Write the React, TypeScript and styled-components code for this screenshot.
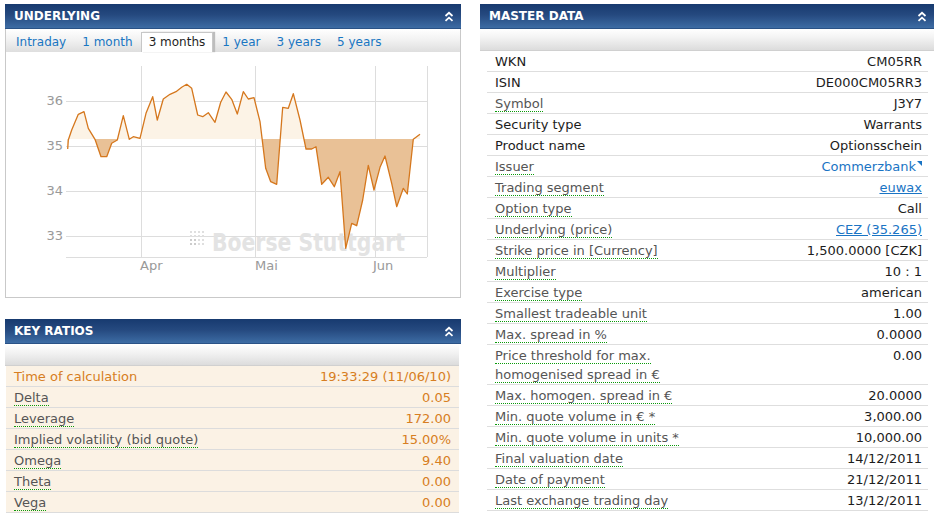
import * as React from 'react';
import styled, { createGlobalStyle } from 'styled-components';

const GlobalStyle = createGlobalStyle`
  body {
    margin: 0;
    background: #fff;
    font-family: "DejaVu Sans", Verdana, sans-serif;
    font-size: 13px;
    color: #222;
  }
`;

const Page = styled.div`
  display: grid;
  grid-template-columns: 456px 454px;
  column-gap: 19px;
  padding: 4px 0 0 5px;
  align-items: start;
`;

const Column = styled.div`
  display: flex;
  flex-direction: column;
  gap: 21px;
`;

const Panel = styled.section``;

const HeaderBar = styled.header`
  height: 25px;
  box-sizing: border-box;
  display: flex;
  align-items: center;
  justify-content: space-between;
  padding: 0 7px 0 9px;
  background: linear-gradient(#173a6f, #25497f 45%, #3d6ca4);
  border-bottom: 1px solid #2a5286;
  color: #fff;
  font-weight: bold;
  font-size: 12px;
`;

const CollapseIcon = () => (
  <svg width="10" height="11" viewBox="0 0 10 11">
    <polyline points="1.5,5 5,1.8 8.5,5" fill="none" stroke="#fff" strokeWidth="1.8" />
    <polyline points="1.5,9.8 5,6.6 8.5,9.8" fill="none" stroke="#fff" strokeWidth="1.8" />
  </svg>
);

const PanelHeader: React.FC<{ children: React.ReactNode }> = ({ children }) => (
  <HeaderBar>
    <span>{children}</span>
    <CollapseIcon />
  </HeaderBar>
);

const ChartBody = styled.div`
  border: 1px solid #c9c9c9;
  border-top: none;
`;

const TabBar = styled.nav`
  height: 23px;
  display: flex;
  align-items: flex-end;
  padding-left: 2px;
  background: linear-gradient(#fff, #f1f1f1 50%, #dedede);
  font-size: 12px;
`;

const Tab = styled.span<{ $active?: boolean }>`
  height: 19px;
  line-height: 19px;
  padding: 0 ${p => (p.$active ? '7px' : '8px')};
  color: ${p => (p.$active ? '#1e1e1e' : '#1976c2')};
  background: ${p => (p.$active ? '#fff' : 'transparent')};
  border: ${p => (p.$active ? '1px solid #c7c7c7' : 'none')};
  border-bottom: none;
  box-shadow: ${p => (p.$active ? '2px 0 1px #bdbdbd' : 'none')};
  margin-right: ${p => (p.$active ? '1px' : '0')};
`;

const Strip = styled.div`
  height: 21px;
  background: linear-gradient(#fff, #f3f3f3 40%, #dcdcdc);
  border-bottom: 1px solid #d0d0d0;
`;

const RatioBody = styled.div`
  padding-right: 2px;
`;

const RatioRow = styled.div`
  display: flex;
  justify-content: space-between;
  align-items: flex-start;
  margin-left: 1px;
  padding: 1px 8px 0 8px;
  line-height: 19px;
  background: #fbf2e5;
  border-bottom: 1px solid #dcdcdc;
  color: #d77e22;
`;

const Label = styled.span<{ $plain?: boolean }>`
  color: ${p => (p.$plain ? '#1c1c1c' : '#555')};
  border-bottom: ${p => (p.$plain ? 'none' : '1px dotted #0a9a0a')};
`;

const MasterBody = styled.div``;

const MasterRow = styled.div`
  display: flex;
  justify-content: space-between;
  align-items: flex-start;
  margin: 0 6px 0 7px;
  padding: 1px 6px 0 8px;
  line-height: 19px;
  border-bottom: 1px solid #dedede;
`;

const LabelCell = styled.div`
  max-width: 215px;
`;

const Value = styled.span`
  color: #1c1c1c;
  text-align: right;
  white-space: nowrap;
`;

const LinkValue = styled.a<{ $underline?: boolean }>`
  color: #1a74c4;
  text-decoration: ${p => (p.$underline ? 'underline' : 'none')};
  white-space: nowrap;
`;

const ExtMark = styled.span`
  display: inline-block;
  width: 0;
  height: 0;
  border-top: 5px solid #1a74c4;
  border-left: 5px solid transparent;
  vertical-align: top;
  margin-top: 4px;
  margin-left: 1px;
`;

const pts: [number, number][] = [
  [67.7, 149], [68.3, 140], [71.7, 130], [78.3, 114.3], [84, 111.7], [88.3, 128.3],
  [95, 139.3], [101, 156.7], [106.7, 156.7], [111.7, 143.3], [117.3, 140], [123.3, 115.7],
  [129.3, 139.3], [133.3, 136.7], [140, 138.3], [146, 113.3], [152.7, 96.7], [157.3, 120],
  [163.3, 99], [170, 94.3], [176, 91.7], [181.7, 87.3], [186.7, 84.3], [191.7, 88.3],
  [197.7, 115], [202.7, 116.7], [208.3, 112.7], [215, 122.3], [220.7, 102.3], [226, 92],
  [231.7, 99.3], [237.3, 114], [243.3, 91.7], [248.3, 99], [254, 97.7], [260, 121.7],
  [265.7, 168.3], [270.7, 181.7], [276.7, 184.3], [282.7, 107.3], [288.3, 108.3], [293.3, 93.7],
  [300, 120], [306, 149], [311.7, 149], [316, 146.7], [321.7, 184.3], [328.3, 177.3],
  [334.3, 186.7], [340, 171.7], [345.7, 248.3], [351.7, 223.3], [356.7, 225.7], [362.7, 200],
  [368.3, 165.3], [374, 190], [380, 167.3], [385, 156], [391.7, 183.3], [396.7, 206.7],
  [403.3, 188.3], [407.3, 194], [413.3, 139.3], [420, 134.3],
];

const BASE = 139;

const Chart = () => {
  const line = pts.map(p => p.join(',')).join(' ');
  const area = `${line} 420,${BASE} 67.7,${BASE}`;
  const dots: React.ReactNode[] = [];
  for (let r = 0; r < 4; r++) {
    for (let c = 0; c < 4; c++) {
      dots.push(
        <rect
          key={`${r}-${c}`}
          x={190 + c * 4}
          y={231 + r * 4}
          width="2"
          height="2"
          fill={r >= 2 && c < 2 ? '#cccccc' : '#dfdfdf'}
        />,
      );
    }
  }
  return (
    <svg width="454" height="245" viewBox="6 52 454 245" style={{ display: 'block' }}>
      <defs>
        <clipPath id="above">
          <rect x="0" y="0" width="500" height={BASE} />
        </clipPath>
        <clipPath id="below">
          <rect x="0" y={BASE} width="500" height="300" />
        </clipPath>
      </defs>
      <g stroke="#dddddd" strokeWidth="1" shapeRendering="crispEdges">
        {[101, 146, 191, 236].map(y => (
          <line key={y} x1="66" x2="427" y1={y} y2={y} />
        ))}
        {[141, 255, 375, 427].map(x => (
          <line key={x} x1={x} x2={x} y1="66" y2="257" />
        ))}
        <line x1="66" x2="427" y1="257" y2="257" />
      </g>
      <g fill="#999999" fontSize="13" fontFamily="DejaVu Sans, Verdana, sans-serif">
        <text x="63" y="105" textAnchor="end">36</text>
        <text x="63" y="150" textAnchor="end">35</text>
        <text x="63" y="195" textAnchor="end">34</text>
        <text x="63" y="240" textAnchor="end">33</text>
        <text x="140" y="270">Apr</text>
        <text x="255" y="270">Mai</text>
        <text x="373" y="270">Jun</text>
      </g>
      {dots}
      <text
        x="212"
        y="251"
        fontSize="24"
        fontWeight="bold"
        fill="#e3e3e3"
        textLength="193"
        lengthAdjust="spacingAndGlyphs"
        fontFamily="DejaVu Sans, Verdana, sans-serif"
      >
        Boerse Stuttgart
      </text>
      <polygon points={area} fill="#fcf3e6" clipPath="url(#above)" />
      <polygon points={area} fill="#e9c196" clipPath="url(#below)" />
      <polyline points={line} fill="none" stroke="#d5771d" strokeWidth="1.3" strokeLinejoin="round" />
    </svg>
  );
};

const ratios: [string, string][] = [
  ['Delta', '0.05'],
  ['Leverage', '172.00'],
  ['Implied volatility (bid quote)', '15.00%'],
  ['Omega', '9.40'],
  ['Theta', '0.00'],
  ['Vega', '0.00'],
];

type MasterItem = {
  label: string;
  value: string;
  plain?: boolean;
  link?: 'ext' | 'under';
};

const master: MasterItem[] = [
  { label: 'WKN', value: 'CM05RR', plain: true },
  { label: 'ISIN', value: 'DE000CM05RR3', plain: true },
  { label: 'Symbol', value: 'J3Y7' },
  { label: 'Security type', value: 'Warrants', plain: true },
  { label: 'Product name', value: 'Optionsschein', plain: true },
  { label: 'Issuer', value: 'Commerzbank', link: 'ext' },
  { label: 'Trading segment', value: 'euwax', link: 'under' },
  { label: 'Option type', value: 'Call' },
  { label: 'Underlying (price)', value: 'CEZ (35.265)', link: 'under' },
  { label: 'Strike price in [Currency]', value: '1,500.0000 [CZK]' },
  { label: 'Multiplier', value: '10 : 1' },
  { label: 'Exercise type', value: 'american' },
  { label: 'Smallest tradeable unit', value: '1.00' },
  { label: 'Max. spread in %', value: '0.0000' },
  { label: 'Price threshold for max. homogenised spread in €', value: '0.00' },
  { label: 'Max. homogen. spread in €', value: '20.0000' },
  { label: 'Min. quote volume in € *', value: '3,000.00' },
  { label: 'Min. quote volume in units *', value: '10,000.00' },
  { label: 'Final valuation date', value: '14/12/2011' },
  { label: 'Date of payment', value: '21/12/2011' },
  { label: 'Last exchange trading day', value: '13/12/2011' },
];

const tabs = ['Intraday', '1 month', '3 months', '1 year', '3 years', '5 years'];

export default function App() {
  return (
    <>
      <GlobalStyle />
      <Page>
        <Column>
          <Panel>
            <PanelHeader>UNDERLYING</PanelHeader>
            <ChartBody>
              <TabBar>
                {tabs.map(t => (
                  <Tab key={t} $active={t === '3 months'}>
                    {t}
                  </Tab>
                ))}
              </TabBar>
              <Chart />
            </ChartBody>
          </Panel>
          <Panel>
            <PanelHeader>KEY RATIOS</PanelHeader>
            <RatioBody>
              <Strip />
              <RatioRow>
                <span>Time of calculation</span>
                <span>19:33:29 (11/06/10)</span>
              </RatioRow>
              {ratios.map(([l, v]) => (
                <RatioRow key={l}>
                  <LabelCell>
                    <Label>{l}</Label>
                  </LabelCell>
                  <span>{v}</span>
                </RatioRow>
              ))}
            </RatioBody>
          </Panel>
        </Column>
        <Panel>
          <PanelHeader>MASTER DATA</PanelHeader>
          <MasterBody>
            <Strip />
            {master.map(m => (
              <MasterRow key={m.label}>
                <LabelCell>
                  <Label $plain={m.plain}>{m.label}</Label>
                </LabelCell>
                {m.link === 'ext' ? (
                  <LinkValue href="#">
                    {m.value}
                    <ExtMark />
                  </LinkValue>
                ) : m.link === 'under' ? (
                  <LinkValue href="#" $underline>
                    {m.value}
                  </LinkValue>
                ) : (
                  <Value>{m.value}</Value>
                )}
              </MasterRow>
            ))}
          </MasterBody>
        </Panel>
      </Page>
    </>
  );
}
